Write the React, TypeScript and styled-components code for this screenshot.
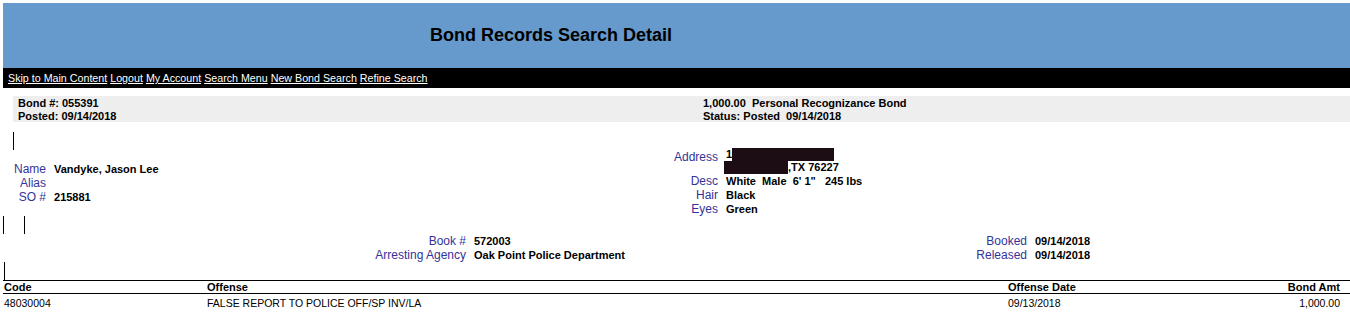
import styled, { createGlobalStyle } from 'styled-components'

const GlobalStyle = createGlobalStyle`
  body {
    margin: 3px 0 0 3px;
    background: #fff;
    color: #000;
    font-family: "Liberation Sans", Arial, sans-serif;
  }
`

const navLinks = [
  'Skip to Main Content',
  'Logout',
  'My Account',
  'Search Menu',
  'New Bond Search',
  'Refine Search',
]

const offenses = [
  {
    code: '48030004',
    offense: 'FALSE REPORT TO POLICE OFF/SP INV/LA',
    date: '09/13/2018',
    amount: '1,000.00',
  },
]

function App() {
  return (
    <>
      <GlobalStyle />
      <Header>
        <Title>Bond Records Search Detail</Title>
      </Header>
      <Nav>
        <LinkStrip>
          {navLinks.map((label, i) => (
            <span key={label}>
              {i > 0 && ' '}
              <NavLink href="#">{label}</NavLink>
            </span>
          ))}
        </LinkStrip>
      </Nav>

      <Summary>
        <div>
          <Line>Bond #: 055391</Line>
          <Line>Posted: 09/14/2018</Line>
        </div>
        <div>
          <Line>1,000.00  Personal Recognizance Bond</Line>
          <Line>Status: Posted  09/14/2018</Line>
        </div>
      </Summary>

      <MarkerRow $indent={10} $top={10}>
        <Marker />
      </MarkerRow>

      <PersonSection>
        <InfoGrid $indent={11} $top={2}>
          <Label>Name</Label>
          <Value>Vandyke, Jason Lee</Value>
          <Label>Alias</Label>
          <Value />
          <Label>SO #</Label>
          <Value>215881</Value>
        </InfoGrid>
        <InfoGrid $indent={0}>
          <Label $drop={2}>Address</Label>
          <AddressValue>
            <div>
              1<Redacted $w={102} />
            </div>
            <div>
              <Redacted $w={64} $shift={-2} />,TX 76227
            </div>
          </AddressValue>
          <Label>Desc</Label>
          <Value>White  Male  6' 1"   245 lbs</Value>
          <Label>Hair</Label>
          <Value>Black</Value>
          <Label>Eyes</Label>
          <Value>Green</Value>
        </InfoGrid>
      </PersonSection>

      <MarkerRow $indent={0} $gap={20}>
        <Marker />
        <Marker />
      </MarkerRow>

      <BookGrid>
        <Label>Book #</Label>
        <Value>572003</Value>
        <Label>Booked</Label>
        <Value>09/14/2018</Value>
        <Label>Arresting Agency</Label>
        <Value>Oak Point Police Department</Value>
        <Label>Released</Label>
        <Value>09/14/2018</Value>
      </BookGrid>

      <MarkerRow $indent={1}>
        <Marker />
      </MarkerRow>

      <OffenseTable>
        <HeadRow>
          <span>Code</span>
          <span>Offense</span>
          <span>Offense Date</span>
          <AmountCell>Bond Amt</AmountCell>
        </HeadRow>
        {offenses.map((o) => (
          <DataRow key={o.code}>
            <span>{o.code}</span>
            <span>{o.offense}</span>
            <span>{o.date}</span>
            <AmountCell>{o.amount}</AmountCell>
          </DataRow>
        ))}
      </OffenseTable>
    </>
  )
}

export default App

const Header = styled.div`
  height: 65px;
  background: #6699cc;
  display: flex;
  align-items: center;
  padding-left: 427px;
`
const Title = styled.h1`
  margin: 0;
  font-size: 18px;
  font-weight: bold;
  line-height: 21px;
`
const Nav = styled.div`
  height: 20px;
  background: #000;
  display: flex;
  align-items: center;
  padding-left: 5px;
`
const LinkStrip = styled.div`
  white-space: nowrap;
  font-size: 10.7px;
  line-height: 14px;
  color: #fff;
`
const NavLink = styled.a`
  color: #fff;
  text-decoration: underline;
`
const Summary = styled.div`
  box-sizing: border-box;
  height: 26px;
  margin: 8px 0 0 10px;
  padding: 1px 0 0 5px;
  background: #eeeeee;
  display: grid;
  grid-template-columns: 685px 1fr;
  font-size: 11px;
  font-weight: bold;
  line-height: 13px;
`
const Line = styled.div`
  white-space: pre;
`
const MarkerRow = styled.div<{ $indent: number; $gap?: number; $top?: number }>`
  display: flex;
  gap: ${(p) => p.$gap ?? 0}px;
  padding-left: ${(p) => p.$indent}px;
  margin-top: ${(p) => p.$top ?? 0}px;
`
const Marker = styled.div`
  width: 0;
  height: 18px;
  border-left: 1px solid #000;
`
const PersonSection = styled.div`
  margin-top: -2px;
  display: grid;
  grid-template-columns: 671px auto;
  align-items: center;
`
const InfoGrid = styled.div<{ $indent: number; $top?: number }>`
  display: grid;
  grid-template-columns: auto auto;
  justify-content: start;
  column-gap: 8px;
  margin-left: ${(p) => p.$indent}px;
  padding-top: ${(p) => p.$top ?? 0}px;
`
const Label = styled.div<{ $drop?: number }>`
  padding-top: ${(p) => p.$drop ?? 0}px;
  color: #333399;
  font-size: 12px;
  line-height: 14px;
  text-align: right;
  white-space: nowrap;
`
const Value = styled.div`
  font-size: 11px;
  font-weight: bold;
  line-height: 14px;
  white-space: pre;
`
const AddressValue = styled.div`
  font-size: 11px;
  font-weight: bold;
  line-height: 13px;
  white-space: pre;
`
const Redacted = styled.span<{ $w: number; $shift?: number }>`
  display: inline-block;
  width: ${(p) => p.$w}px;
  height: 13px;
  margin-left: ${(p) => p.$shift ?? 0}px;
  vertical-align: top;
  background: #1c0c14;
`
const BookGrid = styled.div`
  display: grid;
  grid-template-columns: 463px 292px 253px auto;
  column-gap: 8px;
`
const OffenseTable = styled.div`
  margin-left: -3px;
  font-size: 11px;
`
const Row = styled.div`
  display: grid;
  grid-template-columns: 203px 801px 1fr auto;
  padding: 0 10px 0 4px;
  white-space: nowrap;
`
const HeadRow = styled(Row)`
  border-top: 1px solid #000;
  border-bottom: 1px solid #000;
  font-weight: bold;
  line-height: 12px;
`
const DataRow = styled(Row)`
  padding-top: 3px;
  font-size: 10.5px;
  line-height: 13px;
`
const AmountCell = styled.span`
  text-align: right;
`
